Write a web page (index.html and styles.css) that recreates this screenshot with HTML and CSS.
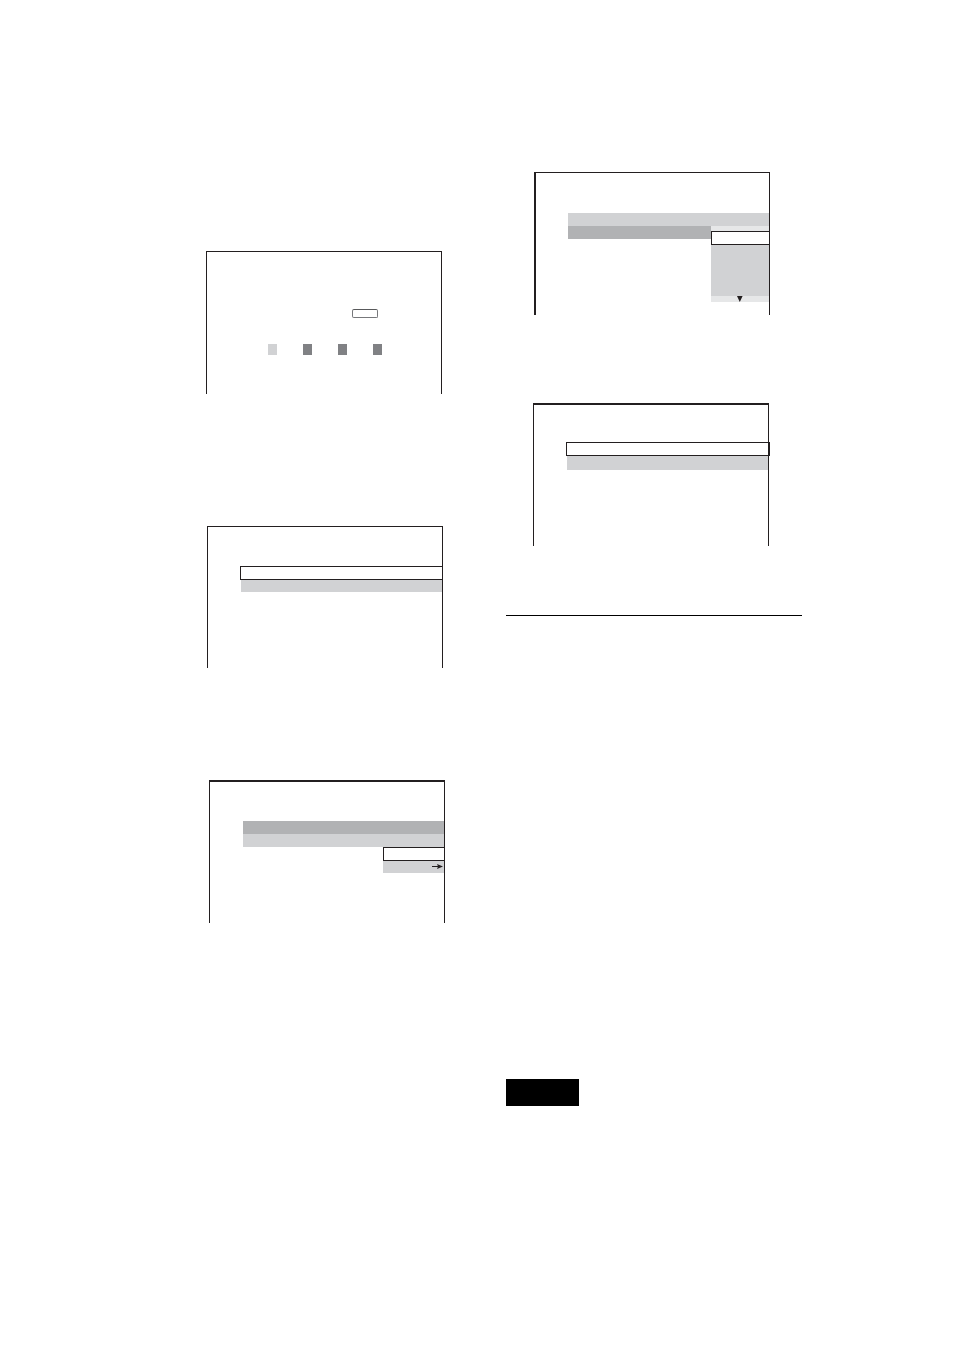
FILE: index.html
```html
<!DOCTYPE html>
<html lang="en">
<head>
    <meta charset="UTF-8">
    <meta name="viewport" content="width=device-width, initial-scale=1.0">
    <title>Setup screens</title>
    <link rel="stylesheet" href="styles.css">
</head>
<body>
    <main class="page">
        <div class="column column-left">
            <div class="screen colors">
                <div class="key"></div>
                <div class="swatches">
                    <span class="swatch light"></span>
                    <span class="swatch"></span>
                    <span class="swatch"></span>
                    <span class="swatch"></span>
                </div>
            </div>

            <div class="screen setup">
                <div class="rows">
                    <div class="row selected"></div>
                    <div class="row short"></div>
                </div>
            </div>

            <div class="screen submenu thick-top">
                <div class="rows">
                    <div class="row dark"></div>
                    <div class="row"></div>
                    <div class="options">
                        <div class="row selected"></div>
                        <div class="row short next">
                            <svg width="11" height="6" viewBox="0 0 11 6">
                                <path d="M0 2h8v1H0z"/>
                                <path d="M5 0l6 2.5L5 5l1-2.5z"/>
                            </svg>
                        </div>
                    </div>
                </div>
            </div>
        </div>

        <div class="column column-right">
            <div class="screen list thick-left">
                <div class="rows">
                    <div class="row"></div>
                    <div class="split">
                        <div class="row dark"></div>
                        <div class="dropdown">
                            <div class="scroll-up"></div>
                            <div class="row selected"></div>
                            <div class="choices"></div>
                            <div class="scroll-down">
                                <svg width="6" height="6" viewBox="0 0 6 6">
                                    <path d="M0 0h5.6L2.8 6z"/>
                                </svg>
                            </div>
                        </div>
                    </div>
                </div>
            </div>

            <div class="screen result thick-top">
                <div class="rows">
                    <div class="row selected wide"></div>
                    <div class="row tall"></div>
                </div>
            </div>

            <hr class="divider">
            <div class="block"></div>
        </div>
    </main>
</body>
</html>
```

FILE: styles.css
```css
body {
    background-color: #FFFFFF;
    font-family: Arial, "Liberation Sans", sans-serif;
    margin: 0;
}
* {
    box-sizing: border-box;
}
svg {
    display: block;
    fill: #231F20;
}
.page {
    display: grid;
    grid-template-columns: 1fr 1fr;
    gap: 4px;
    padding: 172px 152px 258px 206px;
}
.column {
    display: flex;
    flex-direction: column;
}
.column-left {
    padding-top: 79px;
}

/* Screens are open at the bottom */
.screen {
    width: 236px;
    max-width: 100%;
    min-height: 143px;
    border: 1px solid #231F20;
    border-bottom: none;
}
.thick-top {
    border-top-width: 2px;
}
.thick-left {
    border-left-width: 2px;
}
.colors {
    padding: 57px 59px 0 61px;
}
.setup {
    min-height: 142px;
    margin: 132px 0 0 1px;
    padding: 39px 0 0 33px;
}
.submenu {
    margin: 112px 0 0 3px;
    padding: 39px 0 0 33px;
}
.list {
    margin-left: 28px;
    padding: 40px 0 0 32px;
}
.result {
    margin: 88px 0 0 27px;
    padding: 37px 0 0 33px;
}

/* Remote key and color buttons */
.key {
    width: 26px;
    height: 9px;
    margin: 0 4px 0 auto;
    border: 1px solid #77787B;
    border-top-color: #58595B;
    border-radius: 2px;
}
.swatches {
    display: flex;
    justify-content: space-between;
    margin-top: 26px;
}
.swatch {
    width: 9px;
    height: 11px;
    background-color: #808184;
}
.swatch.light {
    background-color: #D1D2D4;
}

/* Menu rows */
.row {
    height: 13px;
    background-color: #D1D2D4;
}
.row.dark {
    background-color: #B1B2B4;
}
.row.short {
    height: 12px;
}
.row.tall {
    height: 14px;
}
.row.selected {
    height: 14px;
    background-color: #FFFFFF;
    border: 1px solid #231F20;
    border-right: none;
}
.rows > .row.selected {
    margin-left: -1px;
}
.rows > .row.wide {
    margin-right: -2px;
    border-right: 2px solid #231F20;
}
.options {
    width: 61px;
    margin-left: auto;
}
.next {
    display: flex;
    align-items: center;
    justify-content: flex-end;
    padding-right: 1px;
}
.split {
    display: flex;
    align-items: flex-start;
}
.split > .row {
    flex: 1;
}
.dropdown {
    width: 58px;
}
.scroll-up {
    height: 5px;
    background-color: #E6E7E8;
}
.choices {
    height: 51px;
    background-color: #D1D2D4;
}
.scroll-down {
    display: flex;
    justify-content: center;
    height: 6px;
    background-color: #E6E7E8;
}

.divider {
    width: 100%;
    margin: 69px 0 0;
    border: none;
    border-top: 1px solid #000000;
}
.block {
    width: 73px;
    height: 27px;
    margin-top: 463px;
    background-color: #000000;
}
```
